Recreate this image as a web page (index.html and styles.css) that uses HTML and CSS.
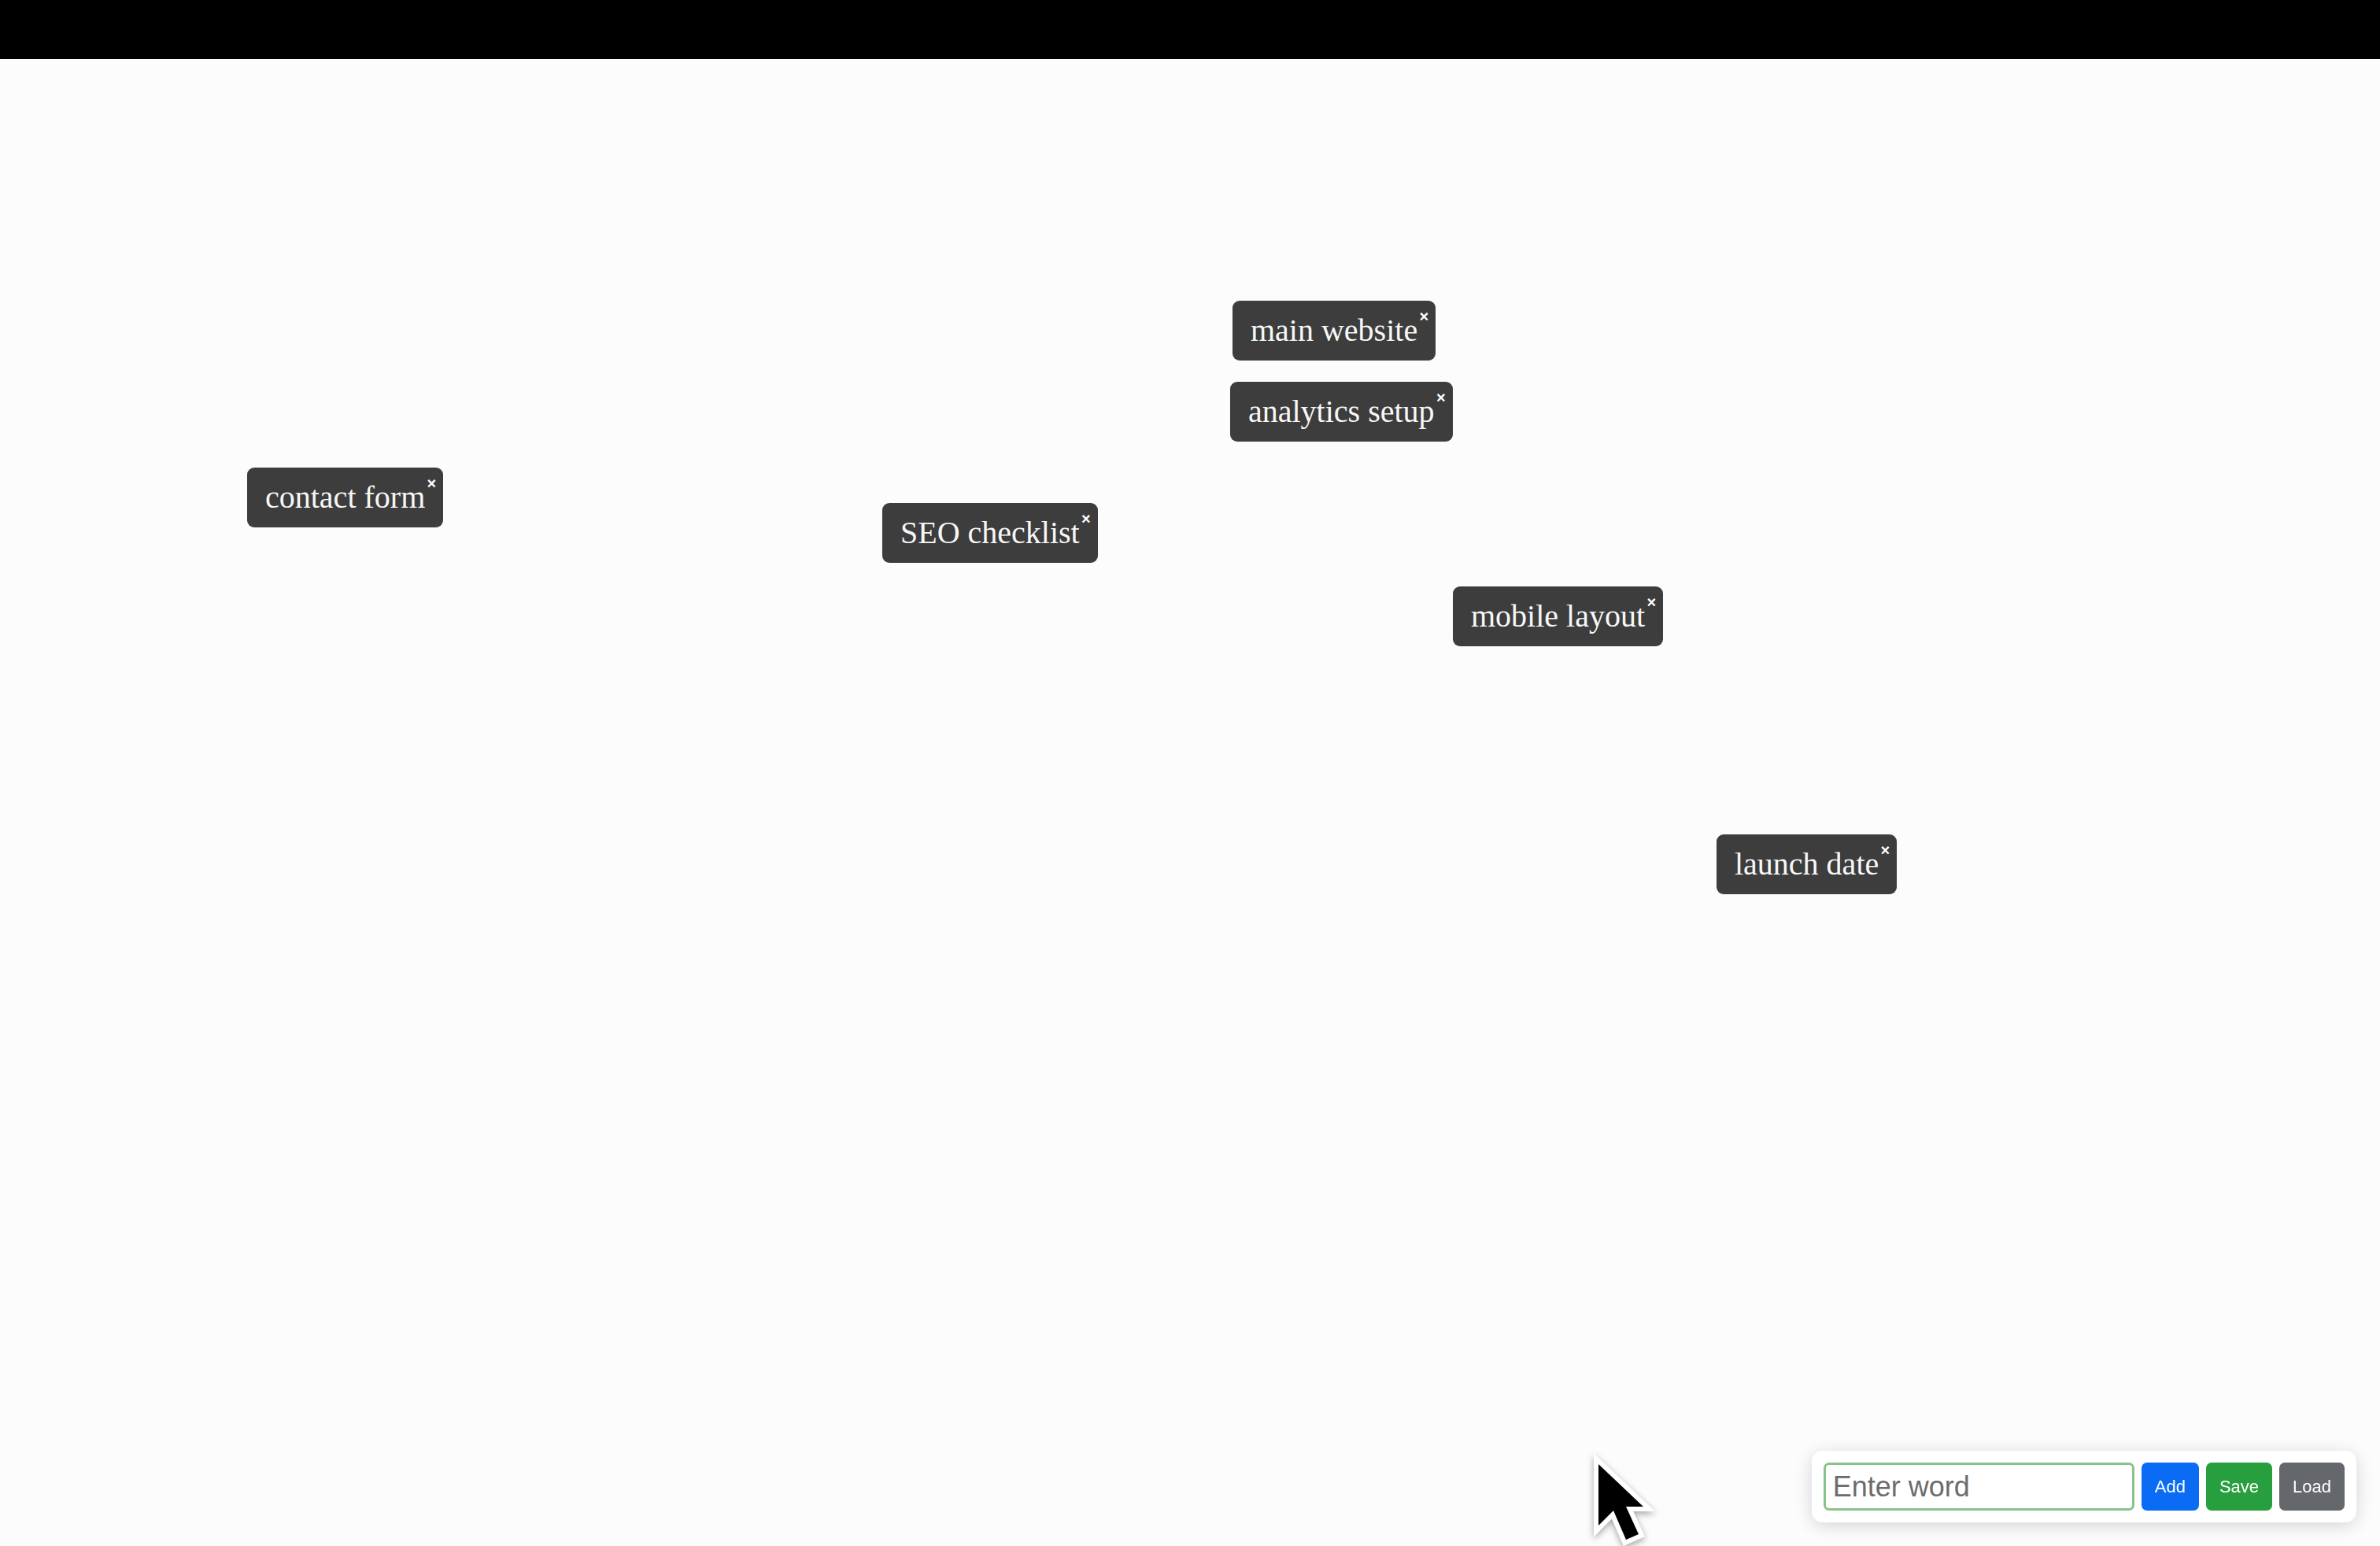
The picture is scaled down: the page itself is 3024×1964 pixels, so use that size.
FILE: index.html
```html
<!DOCTYPE html>
<html lang="en">
<head>
<meta charset="utf-8">
<title>Word board</title>
<link rel="stylesheet" href="styles.css">
</head>
<body>
<div class="topbar"></div>
<main class="canvas">
  <div class="tag" style="left:1566px; top:307px;">main website<span class="close">×</span></div>
  <div class="tag" style="left:1563px; top:410px;">analytics setup<span class="close">×</span></div>
  <div class="tag" style="left:314px; top:519px;">contact form<span class="close">×</span></div>
  <div class="tag" style="left:1121px; top:564px;">SEO checklist<span class="close">×</span></div>
  <div class="tag" style="left:1846px; top:670px;">mobile layout<span class="close">×</span></div>
  <div class="tag" style="left:2181px; top:985px;">launch date<span class="close">×</span></div>
</main>
<div class="panel">
  <input class="word-input" type="text" placeholder="Enter word">
  <button class="btn btn-add">Add</button>
  <button class="btn btn-save">Save</button>
  <button class="btn btn-load">Load</button>
</div>
<svg class="cursor" width="100" height="130" viewBox="0 0 100 130">
  <polygon points="13,23 13,101 32,82 48,119 64,112 48,77 70,77" fill="#000" stroke="#fff" stroke-width="12" stroke-linejoin="miter" stroke-miterlimit="6" paint-order="stroke"/>
</svg>
</body>
</html>
```
FILE: styles.css
```css
html, body {
  margin: 0;
  padding: 0;
  width: 3024px;
  height: 1964px;
  overflow: hidden;
  background: #fcfcfc;
}

body {
  display: flex;
  flex-direction: column;
  font-family: "Liberation Serif", "Times New Roman", serif;
}

.topbar {
  height: 75px;
  flex: 0 0 75px;
  background: #000;
}

.canvas {
  position: relative;
  flex: 1 1 auto;
}

.tag {
  position: absolute;
  padding: 15px 23px;
  line-height: 46px;
  font-size: 40px;
  color: #f7f7f7;
  background: #3d3d3d;
  border-radius: 9px;
  white-space: nowrap;
}

.close {
  position: absolute;
  top: 10px;
  right: 9px;
  font-family: "Liberation Sans", Arial, sans-serif;
  font-weight: bold;
  font-size: 20px;
  line-height: 20px;
  color: #fff;
}

.panel {
  position: fixed;
  right: 30px;
  bottom: 30px;
  display: flex;
  gap: 9px;
  padding: 15px;
  background: #fff;
  border-radius: 14px;
  box-shadow: 0 4px 22px rgba(0, 0, 0, 0.16);
}

.word-input {
  box-sizing: border-box;
  width: 395px;
  height: 61px;
  padding: 0 9px;
  border: 3px solid #88c388;
  border-radius: 7px;
  font-family: "Liberation Sans", Arial, sans-serif;
  font-size: 36px;
  color: #333;
  background: #fff;
  outline: none;
}

.word-input::placeholder {
  color: #6c6c6c;
}

.btn {
  height: 61px;
  padding: 0 17px;
  border: none;
  border-radius: 7px;
  font-family: "Liberation Sans", Arial, sans-serif;
  font-size: 22px;
  color: #fff;
}

.btn-add { background: #0a6cf5; }
.btn-save { background: #289f3e; }
.btn-load { background: #64676c; }

.cursor {
  position: fixed;
  left: 2018px;
  top: 1837px;
  filter: drop-shadow(0 3px 4px rgba(0, 0, 0, 0.35));
}
```
